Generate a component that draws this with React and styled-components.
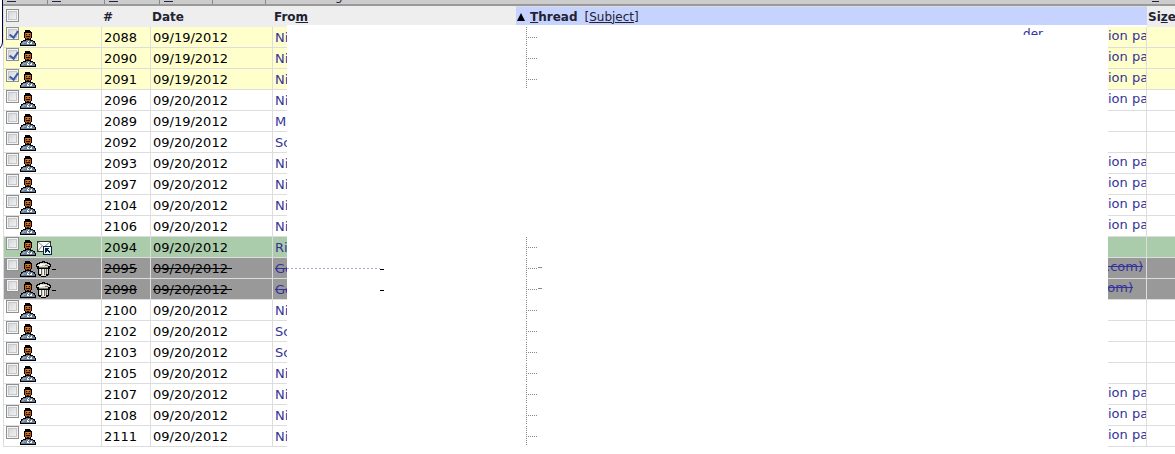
import React, { useState } from "react";
import styled, { createGlobalStyle } from "styled-components";

const GlobalStyle = createGlobalStyle`
    * {
        box-sizing: border-box;
    }

    body {
        margin: 0;
        background: #fff;
        font-family: "DejaVu Sans", Verdana, sans-serif;
        font-size: 13px;
        color: #000;
        overflow: hidden;
    }
`;

const Page = styled.div`
    position: relative;
    padding-left: 3px;
`;

const SidePanelEdge = styled.div`
    position: absolute;
    top: -12px;
    left: -20px;
    width: 23px;
    height: 63px;
    border-right: 1px solid #003;
    border-bottom: 1px solid #66a;
    border-radius: 0 0 9px 0;
    pointer-events: none;
`;

const Toolbar = styled.div`
    display: flex;
    height: 6px;
    padding-left: 4px;
    background: #ccc;
    border-bottom: 2px solid #999;
    overflow: hidden;
`;

const ToolbarItem = styled.div`
    display: flex;
    align-items: flex-end;
    flex: none;
    width: ${(props) => props.$width}px;
    height: 4px;
    margin-right: 4px;
    padding-bottom: 2px;
    border-right: ${(props) => (props.$last ? "none" : "1px solid #888")};
`;

const AccessMark = styled.span`
    width: 9px;
    border-bottom: 1px solid #224;
`;

const FarMark = styled(AccessMark)`
    height: 2px;
    margin: 0 16px 0 auto;
    width: 7px;
`;

const Descender = styled.span`
    margin-left: ${(props) => props.$indent}px;
    font-size: 12px;
    line-height: 12px;
    color: #224;
`;

const Table = styled.table`
    width: 100%;
    table-layout: fixed;
    border-collapse: separate;
    border-spacing: 0;
`;

const HeadCell = styled.th`
    height: 21px;
    padding: 2px 0 0 1px;
    background: #eee;
    border-left: ${(props) => (props.$first ? "1px solid #ddd" : "none")};
    color: #223;
    font-size: 12px;
    line-height: 18px;
    text-align: left;
    vertical-align: top;
    white-space: nowrap;
    overflow: hidden;
`;

const FromHead = styled(HeadCell)`
    background: linear-gradient(#fff, #fff) 14px 100% / 100% 2px no-repeat #eee;
`;

const ThreadHead = styled(HeadCell)`
    background: #c6d3ff;
    border-top: 1px solid #ddd;
    border-bottom: 2px solid #fff;
    padding-top: 0;
`;

const HeadRow = styled.div`
    display: flex;
    align-items: center;
    height: 18px;
    padding-top: 1px;
`;

const HeadLink = styled.a`
    color: #223;
    text-decoration: none;
`;

const SubjectSort = styled.span`
    margin-left: 7px;
    font-weight: normal;

    a {
        text-decoration: underline;
    }
`;

const SortIcon = styled.svg`
    width: 8px;
    height: 8px;
    margin-right: 5px;
`;

const rowColors = {
    selected: "#ffffcc",
    answered: "#aaccaa",
    deleted: "#999999",
};

const Row = styled.tr`
    background: ${(props) => rowColors[props.$kind] || "#fff"};
`;

const Cell = styled.td`
    height: 21px;
    padding: 1px 0 0 2px;
    border-right: 1px solid #ddd;
    border-bottom: 1px solid #ddd;
    border-left: ${(props) => (props.$first ? "1px solid #ddd" : "none")};
    line-height: 19px;
    text-decoration: ${(props) => (props.$struck ? "line-through" : "none")};
    vertical-align: top;
    white-space: pre;
    overflow: hidden;
`;

const FlagCell = styled(Cell)`
    padding-top: 0;
`;

const FromCell = styled(Cell)`
    border-right: none;
    color: #339;
`;

const SizeCell = styled(Cell)`
    border-right: none;
`;

const BlankCell = styled.td`
    height: 21px;
    padding: 0;
    background: #fff;
    vertical-align: top;
`;

const SubjectCell = styled(Cell)`
    padding: 0;
    color: #339;
`;

const SubjectEnd = styled.div`
    display: flex;
    justify-content: ${(props) => (props.$inset ? "flex-end" : "flex-start")};
    height: 20px;
    padding-right: ${(props) => props.$inset || 0}px;
    line-height: 18px;
    overflow: hidden;
`;

const Flags = styled.div`
    display: flex;
    height: 20px;
    padding-right: 8px;
`;

const Checkbox = styled.input`
    appearance: none;
    flex: none;
    position: relative;
    width: 13px;
    height: 13px;
    margin: 0 1px 0 0;
    border: 1px solid #8e8f8f;
    background: linear-gradient(135deg, #ccd0d4, #f8f8f8);
    box-shadow: inset 0 0 0 1px #f4f4f4, inset 0 0 0 2px #c4c8cc;

    &:checked::after {
        content: "";
        position: absolute;
        top: 1px;
        left: 4px;
        width: 4px;
        height: 7px;
        border: solid #3f5aa6;
        border-width: 0 2px 2px 0;
        transform: rotate(35deg);
    }
`;

const HeadCheckbox = styled(Checkbox)`
    display: block;
    margin: 1px 0 0 1px;
`;

const FlagIcon = styled.svg`
    flex: none;
    width: 16px;
    height: 16px;
    margin-top: 3px;
`;

const Strike = styled.span`
    width: 4px;
    height: 12px;
    border-bottom: 1px solid #000;
`;

const Leftover = styled.div`
    display: flex;
    height: 12px;
    align-items: flex-end;
`;

const FaintLine = styled.span`
    width: 93px;
    height: 2px;
    background: repeating-linear-gradient(90deg, ${(props) => (props.$visible ? "#aac" : "#fff")} 0 2px, #fff 2px 4px) 0 0 / 100% 1px no-repeat;
`;

const Tree = styled.div`
    display: flex;
    height: 21px;
    padding-left: 10px;
`;

const Trunk = styled.span`
    width: 1px;
    margin: 0 1px 2px 0;
    background: repeating-linear-gradient(#888 0 1px, #fff 1px 2px);
`;

const Branch = styled.span`
    width: 10px;
    height: 11px;
    background: repeating-linear-gradient(90deg, #888 0 1px, #fff 1px 2px) 0 100% / 100% 1px no-repeat;
`;

const BranchStrike = styled.span`
    width: 4px;
    height: 10px;
    border-bottom: 1px solid #888;
`;

const CutText = styled.span`
    height: 8px;
    margin-left: auto;
    padding-right: 65px;
    color: #339;
    font-size: 12px;
    line-height: 15px;
    overflow: hidden;
`;

function PersonIcon() {
    return (
        <FlagIcon viewBox="0 0 16 16" shapeRendering="crispEdges" aria-label="Personal">
            <path fill="#000" d="M5 0h5v1h1v1h1v6h-1v2h2v1h2v2h1v3H0v-3h1v-2h2v-1h2V8H4V2h1z" />
            <path fill="#b85a10" d="M5 3h6v5h-1v1H6V8H5z" />
            <path fill="#e08428" d="M6 3h4v1H6zM7 5h1v1H7z" />
            <path fill="#201008" d="M6 4h1v1H6zM9 4h1v1H9zM6 6h4v1H6zM7 8h2v1H7z" />
            <path fill="#6a7e98" d="M3 11h3v-1h4v1h3v1h1v1h1v2H1v-2h1v-1h1z" />
            <path fill="#93a6bb" d="M3 12h3v1H3zM2 13h2v1H2z" />
            <path fill="#fff" d="M8 11h1v1H8zM7 12h1v1H7zM7 13h2v1H7zM11 12h1v2h-2v-1h1z" />
        </FlagIcon>
    );
}

function EnvelopeIcon() {
    return (
        <FlagIcon viewBox="0 0 16 16" shapeRendering="crispEdges" aria-label="Answered">
            <path fill="#333" d="M1 1h14v11H1z" />
            <path fill="#fff" d="M2 2h12v9H2z" />
            <path fill="none" stroke="#888" shapeRendering="auto" d="M2 2l6 5 6-5M2 11l4-5" />
            <path fill="#123" d="M7 6h9v9H7z" />
            <path fill="#e6f5ff" d="M8 7h7v7H8z" />
            <path fill="#024" d="M9 8h4v1h-1v1h1v1h1v2h-1v-1h-1v-1h-1v1h-1v1H9z" />
        </FlagIcon>
    );
}

function TrashIcon() {
    return (
        <FlagIcon viewBox="0 0 16 16" shapeRendering="crispEdges" aria-label="Deleted">
            <path fill="#000" d="M6 0h3v1h3v1h2v1h1v3h-1v2h-1v6h-1v1h-2v1H5v-1H3v-1H2V8H1V6H0V3h1V2h2V1h3z" />
            <path fill="#d8d8cc" d="M4 2h7v1h2v1h1v1h-2v1H3V5H1V4h1V3h2z" />
            <path fill="#fff" d="M4 3h5v1H4zM3 4h3v1H3z" />
            <path fill="#77776c" d="M7 1h1v1H7zM9 4h3v1H9zM3 6h9v1H3z" />
            <path fill="#d8d8cc" d="M3 8h9v5h-2v2H5v-2H3z" />
            <path fill="#fff" d="M4 8h1v5H4zM7 8h1v6H7z" />
            <path fill="#66665c" d="M5 8h1v6H5zM8 8h1v6H8zM10 8h1v5h-1z" />
        </FlagIcon>
    );
}

const messages = [
    { id: 2088, date: "09/19/2012", from: "Ni", end: "ion pa", kind: "selected", tree: true, cut: "der" },
    { id: 2090, date: "09/19/2012", from: "Ni", end: "ion pa", kind: "selected", tree: true },
    { id: 2091, date: "09/19/2012", from: "Ni", end: "ion pa", kind: "selected", tree: true },
    { id: 2096, date: "09/20/2012", from: "Ni", end: "ion pa" },
    { id: 2089, date: "09/19/2012", from: "Ma" },
    { id: 2092, date: "09/20/2012", from: "Sc" },
    { id: 2093, date: "09/20/2012", from: "Ni", end: "ion pa" },
    { id: 2097, date: "09/20/2012", from: "Ni", end: "ion pa" },
    { id: 2104, date: "09/20/2012", from: "Ni", end: "ion pa" },
    { id: 2106, date: "09/20/2012", from: "Ni", end: "ion pa" },
    { id: 2094, date: "09/20/2012", from: "Ri", kind: "answered", tree: true },
    { id: 2095, date: "09/20/2012", from: "Ge", end: ".com)", inset: 3, kind: "deleted", tree: true, faint: true },
    { id: 2098, date: "09/20/2012", from: "Ge", end: "om)", inset: 13, kind: "deleted", tree: true },
    { id: 2100, date: "09/20/2012", from: "Ni", tree: true },
    { id: 2102, date: "09/20/2012", from: "Sc", tree: true },
    { id: 2103, date: "09/20/2012", from: "Sc", tree: true },
    { id: 2105, date: "09/20/2012", from: "Ni", tree: true },
    { id: 2107, date: "09/20/2012", from: "Ni", end: "ion pa", tree: true },
    { id: 2108, date: "09/20/2012", from: "Ni", end: "ion pa", tree: true },
    { id: 2111, date: "09/20/2012", from: "Ni", end: "ion pa", tree: true },
];

function MessageRow({ message, checked, onToggle }) {
    const deleted = message.kind === "deleted";
    const tail = deleted ? "\u00a0" : "";

    return (
        <Row $kind={message.kind}>
            <FlagCell $first>
                <Flags>
                    <Checkbox
                        type="checkbox"
                        aria-label={`Select message ${message.id}`}
                        checked={checked}
                        onChange={() => onToggle(message.id)}
                    />
                    <PersonIcon />
                    {message.kind === "answered" && <EnvelopeIcon />}
                    {deleted && <TrashIcon />}
                    {deleted && <Strike />}
                </Flags>
            </FlagCell>
            <Cell $struck={deleted}>{message.id}</Cell>
            <Cell $struck={deleted}>{message.date + tail}</Cell>
            <FromCell $struck={deleted}>{message.from}</FromCell>
            <BlankCell>
                {deleted && (
                    <Leftover>
                        <FaintLine $visible={message.faint} />
                        <Strike />
                    </Leftover>
                )}
            </BlankCell>
            <BlankCell>
                <Tree>
                    {message.tree && <Trunk />}
                    {message.tree && <Branch />}
                    {deleted && <BranchStrike />}
                    {message.cut && <CutText>{message.cut}</CutText>}
                </Tree>
            </BlankCell>
            <SubjectCell $struck={deleted}>
                <SubjectEnd $inset={message.inset}>{message.end}</SubjectEnd>
            </SubjectCell>
            <SizeCell />
        </Row>
    );
}

export default function App() {
    const [selected, setSelected] = useState([2088, 2090, 2091]);

    const toggle = (id) => {
        setSelected(selected.includes(id) ? selected.filter((s) => s !== id) : [...selected, id]);
    };

    const toggleAll = (e) => {
        setSelected(e.target.checked ? messages.map((m) => m.id) : []);
    };

    return (
        <Page>
            <GlobalStyle />
            <Toolbar>
                <ToolbarItem $width={41}><AccessMark /></ToolbarItem>
                <ToolbarItem $width={53}><AccessMark /></ToolbarItem>
                <ToolbarItem $width={51}><AccessMark /></ToolbarItem>
                <ToolbarItem $width={49}><AccessMark /></ToolbarItem>
                <ToolbarItem $width={49} />
                <ToolbarItem $width={100} $last><Descender $indent={65}>g</Descender></ToolbarItem>
                <FarMark />
            </Toolbar>
            <Table>
                <colgroup>
                    <col style={{ width: 99 }} />
                    <col style={{ width: 49 }} />
                    <col style={{ width: 122 }} />
                    <col style={{ width: 14 }} />
                    <col style={{ width: 229 }} />
                    <col />
                    <col style={{ width: 39 }} />
                    <col style={{ width: 28 }} />
                </colgroup>
                <thead>
                    <tr>
                        <HeadCell $first>
                            <HeadCheckbox
                                type="checkbox"
                                aria-label="Check all"
                                checked={selected.length === messages.length}
                                onChange={toggleAll}
                            />
                        </HeadCell>
                        <HeadCell><HeadLink href="#number">#</HeadLink></HeadCell>
                        <HeadCell><HeadLink href="#date">Date</HeadLink></HeadCell>
                        <FromHead colSpan={2}><HeadLink href="#from">Fro<u>m</u></HeadLink></FromHead>
                        <ThreadHead colSpan={2}>
                            <HeadRow>
                                <SortIcon viewBox="0 0 8 8"><path fill="#000" d="M4 0l4 8H0z" /></SortIcon>
                                <HeadLink href="#thread"><u>T</u>hread</HeadLink>
                                <SubjectSort>[<HeadLink href="#subject">Subject</HeadLink>]</SubjectSort>
                            </HeadRow>
                        </ThreadHead>
                        <HeadCell><HeadLink href="#size">Si<u>z</u>e</HeadLink></HeadCell>
                    </tr>
                </thead>
                <tbody>
                    {messages.map((message) => (
                        <MessageRow
                            key={message.id}
                            message={message}
                            checked={selected.includes(message.id)}
                            onToggle={toggle}
                        />
                    ))}
                </tbody>
            </Table>
            <SidePanelEdge />
        </Page>
    );
}
